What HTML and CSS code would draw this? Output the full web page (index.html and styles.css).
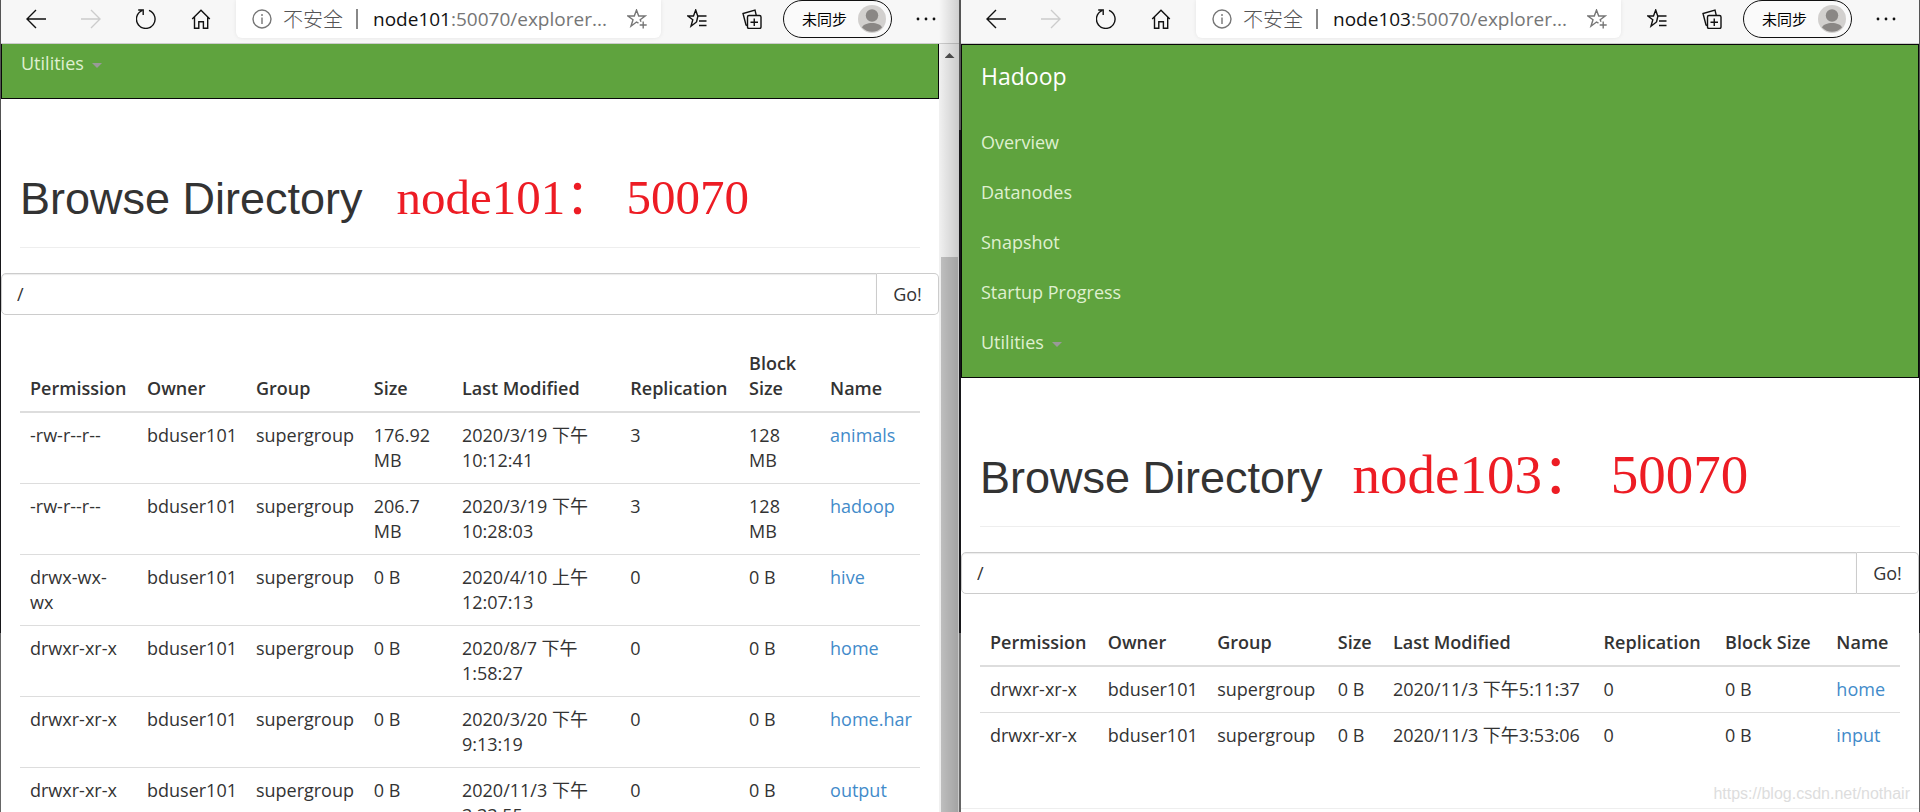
FILE: index.html
```html
<!DOCTYPE html>
<html lang="zh-CN">
<head>
<meta charset="utf-8">
<title>Browsing HDFS</title>
<link rel="stylesheet" href="styles.css">
</head>
<body>
<svg class="sprite" aria-hidden="true">
  <symbol id="back" viewBox="0 0 20 20"><path d="M20 10H1M10 1 1 10l9 9"/></symbol>
  <symbol id="forward" viewBox="0 0 20 20"><path d="M0 10h19M10 1l9 9-9 9"/></symbol>
  <symbol id="reload" viewBox="0 0 20 20"><path d="M13 1.4A9.3 9.3 0 1 1 6 1.6M2.2 1h5v5"/></symbol>
  <symbol id="home" viewBox="0 0 20 20"><path d="M1.2 10 10 1.2 18.800 10M3.500 8v11.200h4.300v-6.500h4.600v6.500h4.300V8"/></symbol>
  <symbol id="info" viewBox="0 0 20 20"><circle cx="10" cy="10" r="9"/><path d="M10 8.500V15M10 5v2"/></symbol>
  <symbol id="star-add" viewBox="0 0 20 20"><path d="M11.500 14.200 9.500 13 4 17.200l2-6.400L.8 7h6.500l2.200-6 2.200 6h6.500l-5 3.800.8 2M16.200 12.500v7M12.700 16h7"/></symbol>
  <symbol id="favorites" viewBox="0 0 20 20"><path d="M9.500 13 4 17.200l1.800-6.400L.8 7h5.700l2.200-6 2 6h8.800M9.500 13l1.300-5.500M12 12h7.500M12 16.500h7.500"/></symbol>
  <symbol id="collections" viewBox="0 0 20 20"><rect x="5.500" y="6.500" width="13.500" height="13" rx="1.500"/><path d="M12.250 9.500v7.500M8.500 13.200H16M5.500 16.500 4 16 1 4.500 13 1.200l1.200 5"/></symbol>
  <symbol id="avatar" viewBox="0 0 28 28"><circle cx="14" cy="14" r="14" fill="#d2d0ce"/><circle cx="14" cy="10.500" r="6.200" fill="#8a8785"/><path d="M4 22.500c2-6 18-6 20 0a14 14 0 0 1-20 0z" fill="#8a8785"/></symbol>
  <symbol id="dots" viewBox="0 0 20 20"><g fill="#111" stroke="none"><circle cx="2" cy="10" r="1.400"/><circle cx="10" cy="10" r="1.400"/><circle cx="18" cy="10" r="1.400"/></g></symbol>
</svg>
<main class="desktop">
  <section class="window window-back">
    <header class="toolbar">
      <button class="tool" aria-label="Back"><svg class="icon"><use href="#back"/></svg></button>
      <button class="tool tool-off" aria-label="Forward" disabled><svg class="icon"><use href="#forward"/></svg></button>
      <button class="tool" aria-label="Refresh"><svg class="icon"><use href="#reload"/></svg></button>
      <button class="tool" aria-label="Home"><svg class="icon"><use href="#home"/></svg></button>
      <div class="address">
        <svg class="icon"><use href="#info"/></svg>
        <span class="insecure">不安全</span>
        <span class="bar"></span>
        <span class="url"><b>node101</b>:50070/explorer...</span>
        <button class="tool tool-grey" aria-label="Add favorite"><svg class="icon"><use href="#star-add"/></svg></button>
      </div>
      <button class="tool" aria-label="Favorites"><svg class="icon"><use href="#favorites"/></svg></button>
      <button class="tool" aria-label="Collections"><svg class="icon"><use href="#collections"/></svg></button>
      <button class="profile">未同步<svg class="avatar"><use href="#avatar"/></svg></button>
      <button class="tool" aria-label="More"><svg class="icon"><use href="#dots"/></svg></button>
    </header>
    <div class="view">
      <div class="page">
        <nav class="navbar navbar-scrolled">
          <ul><li><a href="#">Utilities<span class="caret"></span></a></li></ul>
        </nav>
        <div class="page-header">
          <h1>Browse Directory</h1>
          <span class="note">node101： 50070</span>
        </div>
        <form class="path">
          <input type="text" value="/" aria-label="Directory">
          <button type="button">Go!</button>
        </form>
        <div class="listing">
          <table>
            <colgroup><col class="c-perm"><col class="c-owner"><col class="c-group"><col class="c-size"><col class="c-date"><col class="c-rep"><col class="c-block"><col></colgroup>
            <thead><tr><th>Permission</th><th>Owner</th><th>Group</th><th>Size</th><th>Last Modified</th><th>Replication</th><th>Block Size</th><th>Name</th></tr></thead>
            <tbody>
              <tr><td>-rw-r--r--</td><td>bduser101</td><td>supergroup</td><td>176.92 MB</td><td>2020/3/19 下午10:12:41</td><td>3</td><td>128 MB</td><td><a href="#">animals</a></td></tr>
              <tr><td>-rw-r--r--</td><td>bduser101</td><td>supergroup</td><td>206.7 MB</td><td>2020/3/19 下午10:28:03</td><td>3</td><td>128 MB</td><td><a href="#">hadoop</a></td></tr>
              <tr><td>drwx-wx-<wbr>wx</td><td>bduser101</td><td>supergroup</td><td>0 B</td><td>2020/4/10 上午12:07:13</td><td>0</td><td>0 B</td><td><a href="#">hive</a></td></tr>
              <tr><td>drwxr-xr-x</td><td>bduser101</td><td>supergroup</td><td>0 B</td><td>2020/8/7 下午<wbr>1:58:27</td><td>0</td><td>0 B</td><td><a href="#">home</a></td></tr>
              <tr><td>drwxr-xr-x</td><td>bduser101</td><td>supergroup</td><td>0 B</td><td>2020/3/20 下午9:13:19</td><td>0</td><td>0 B</td><td><a href="#">home.har</a></td></tr>
              <tr><td>drwxr-xr-x</td><td>bduser101</td><td>supergroup</td><td>0 B</td><td>2020/11/3 下午3:33:55</td><td>0</td><td>0 B</td><td><a href="#">output</a></td></tr>
            </tbody>
          </table>
        </div>
      </div>
      <div class="scrollbar"><span class="scroll-top"><span class="scroll-up"></span></span><span class="thumb"></span></div>
    </div>
  </section>

  <section class="window">
    <header class="toolbar">
      <button class="tool" aria-label="Back"><svg class="icon"><use href="#back"/></svg></button>
      <button class="tool tool-off" aria-label="Forward" disabled><svg class="icon"><use href="#forward"/></svg></button>
      <button class="tool" aria-label="Refresh"><svg class="icon"><use href="#reload"/></svg></button>
      <button class="tool" aria-label="Home"><svg class="icon"><use href="#home"/></svg></button>
      <div class="address">
        <svg class="icon"><use href="#info"/></svg>
        <span class="insecure">不安全</span>
        <span class="bar"></span>
        <span class="url"><b>node103</b>:50070/explorer...</span>
        <button class="tool tool-grey" aria-label="Add favorite"><svg class="icon"><use href="#star-add"/></svg></button>
      </div>
      <button class="tool" aria-label="Favorites"><svg class="icon"><use href="#favorites"/></svg></button>
      <button class="tool" aria-label="Collections"><svg class="icon"><use href="#collections"/></svg></button>
      <button class="profile">未同步<svg class="avatar"><use href="#avatar"/></svg></button>
      <button class="tool" aria-label="More"><svg class="icon"><use href="#dots"/></svg></button>
    </header>
    <div class="view">
      <div class="page">
        <nav class="navbar">
          <a class="brand" href="#">Hadoop</a>
          <ul>
            <li><a href="#">Overview</a></li>
            <li><a href="#">Datanodes</a></li>
            <li><a href="#">Snapshot</a></li>
            <li><a href="#">Startup Progress</a></li>
            <li><a href="#">Utilities<span class="caret"></span></a></li>
          </ul>
        </nav>
        <div class="page-header page-header-tight">
          <h1>Browse Directory</h1>
          <span class="note note-large">node103： 50070</span>
        </div>
        <form class="path">
          <input type="text" value="/" aria-label="Directory">
          <button type="button">Go!</button>
        </form>
        <div class="listing listing-wide">
          <table>
            <colgroup><col class="c-perm"><col class="c-owner"><col class="c-group"><col class="c-size"><col class="c-date"><col class="c-rep"><col class="c-block"><col></colgroup>
            <thead><tr><th>Permission</th><th>Owner</th><th>Group</th><th>Size</th><th>Last Modified</th><th>Replication</th><th>Block Size</th><th>Name</th></tr></thead>
            <tbody>
              <tr><td>drwxr-xr-x</td><td>bduser101</td><td>supergroup</td><td>0 B</td><td>2020/11/3 下午5:11:37</td><td>0</td><td>0 B</td><td><a href="#">home</a></td></tr>
              <tr><td>drwxr-xr-x</td><td>bduser101</td><td>supergroup</td><td>0 B</td><td>2020/11/3 下午3:53:06</td><td>0</td><td>0 B</td><td><a href="#">input</a></td></tr>
            </tbody>
          </table>
        </div>
        <hr>
      </div>
    </div>
    <span class="watermark">https://blog.csdn.net/nothair</span>
  </section>
</main>
</body>
</html>
```
FILE: styles.css
```css
* { box-sizing: border-box; }
body {
  margin: 0;
  font: 18px/25px "Open Sans", "Noto Sans CJK SC", sans-serif;
  color: #333;
  background: #222;
}
button, input { font: inherit; color: inherit; margin: 0; }
.sprite { display: none; }

.desktop {
  display: grid;
  grid-template-columns: 1fr 1fr;
  gap: 2px;
  height: 100vh;
  padding: 0 1px;
  background: linear-gradient(#555 0 16%, #17171a 16% 78%, #666 78%);
}
.window {
  position: relative;
  display: flex;
  flex-direction: column;
  min-width: 0;
  min-height: 0;
  overflow: hidden;
  background: #fff;
}
.window-back::after {
  content: "";
  position: absolute;
  inset: 0 0 0 auto;
  width: 20px;
  background: linear-gradient(90deg, transparent, rgba(0, 0, 0, .16));
  pointer-events: none;
}

/* browser toolbar */
.toolbar {
  display: flex;
  flex: none;
  gap: 35px;
  height: 44px;
  padding: 0 23px 0 25px;
  background: #f7f7f7;
  border-bottom: 1px solid #ccc;
}
.tool {
  display: flex;
  align-items: center;
  flex: none;
  height: 37px;
  padding: 0;
  border: 0;
  background: none;
  color: #111;
}
.tool-off { color: #ccc; }
.tool-grey { color: #767676; margin-left: auto; }
.icon {
  flex: none;
  width: 20px;
  height: 20px;
  fill: none;
  stroke: currentColor;
  stroke-width: 1.4;
}
.address {
  display: flex;
  align-items: center;
  flex: 1;
  min-width: 0;
  height: 38px;
  margin: 0 -9px 0 -10px;
  padding: 0 14px 0 16px;
  background: #fff;
  border-radius: 0 0 6px 6px;
  box-shadow: 0 0 4px rgba(0, 0, 0, .08);
  color: #767676;
  white-space: nowrap;
}
.insecure { margin-left: 11px; font-size: 20px; font-weight: 300; color: #555; }
.bar { width: 2px; height: 20px; margin: 0 15px 0 13px; background: #888; }
.url { font-size: 19px; }
.url b { font-weight: 400; color: #111; }
.profile {
  display: flex;
  align-items: center;
  justify-content: space-between;
  flex: none;
  width: 109px;
  height: 38px;
  margin: 0 -11px 0 -14px;
  padding: 0 5px 0 18px;
  border: 1px solid #111;
  border-radius: 19px;
  background: #fafafa;
  color: #000;
  font-size: 15px;
}
.avatar { width: 28px; height: 28px; }

/* page area */
.view { display: flex; flex: 1; min-height: 0; }
.page { flex: 1; min-width: 0; overflow: hidden; }
.scrollbar {
  display: flex;
  flex-direction: column;
  width: 20px;
  padding: 0 1px 0 2px;
  background: #f1f1f1;
}
.scroll-top { flex: 0 0 27.7%; display: flex; justify-content: center; padding-top: 9px; }
.scroll-up {
  width: 10px;
  height: 5px;
  background: #505050;
  clip-path: polygon(50% 0, 100% 100%, 0 100%);
}
.thumb { flex: 1; background: #c1c1c1; }

.navbar {
  padding-bottom: 10px;
  background: #5fa33e;
  border: 1px solid #080808;
}
.navbar a { color: #dff0d0; text-decoration: none; }
.navbar ul { margin: 0; padding: 0; list-style: none; }
.navbar li { line-height: 50px; padding: 0 19px; }
.navbar .brand {
  display: block;
  padding: 0 19px;
  margin-bottom: 10px;
  font-size: 23px;
  line-height: 62px;
  color: #fff;
}
.navbar-scrolled { border-top: 0; padding-bottom: 16px; }
.navbar-scrolled li { line-height: 38px; }
.caret {
  display: inline-block;
  margin-left: 8px;
  vertical-align: middle;
  border: 5px solid transparent;
  border-top-color: #999;
  border-bottom: 0;
}

.page-header {
  display: flex;
  align-items: baseline;
  gap: 34px;
  margin: 75px 19px 25px;
  padding-bottom: 23px;
  border-bottom: 1px solid #eee;
  white-space: nowrap;
}
.page-header-tight { gap: 30px; }
h1 { margin: 0; font: 45px/50px "Liberation Sans", Arial, sans-serif; }
.note {
  font: 49px/40px "Liberation Serif", "Noto Sans CJK SC", serif;
  color: #ed1c24;
}
.note-large { font-size: 55px; }

.path { display: flex; }
.path input {
  flex: 1;
  min-width: 0;
  height: 42px;
  padding: 0 15px;
  border: 1px solid #ccc;
  border-radius: 5px 0 0 5px;
  box-shadow: inset 0 1px 1px rgba(0, 0, 0, .08);
  background: #fff;
}
.path button {
  width: 62px;
  border: 1px solid #ccc;
  border-left: 0;
  border-radius: 0 5px 5px 0;
  background: #fff;
  padding: 0;
}

.listing { padding: 26px 19px 0; }
.listing-wide td { white-space: nowrap; }
table { width: 100%; table-layout: fixed; border-collapse: separate; border-spacing: 0; }
th, td { padding: 10px; text-align: left; }
th { font-weight: 600; vertical-align: bottom; border-bottom: 2px solid #ddd; }
td { vertical-align: top; }
tr + tr td { border-top: 1px solid #ddd; }
td a { color: #428bca; text-decoration: none; }
.c-perm { width: 13%; }
.c-owner { width: 12.1%; }
.c-group { width: 13.1%; }
.c-size { width: 9.8%; }
.c-date { width: 18.7%; }
.c-rep { width: 13.2%; }
.c-block { width: 9%; }
.listing-wide .c-perm { width: 12.8%; }
.listing-wide .c-owner { width: 11.9%; }
.listing-wide .c-size { width: 6%; }
.listing-wide .c-date { width: 22.9%; }
.listing-wide .c-block { width: 12.1%; }
hr { margin: 50px 0 0; border: 0; border-top: 1px solid #eee; }
.watermark {
  position: absolute;
  right: 9px;
  bottom: 6px;
  font: 16px/25px "Liberation Sans", Arial, sans-serif;
  color: #ddd;
}
```
